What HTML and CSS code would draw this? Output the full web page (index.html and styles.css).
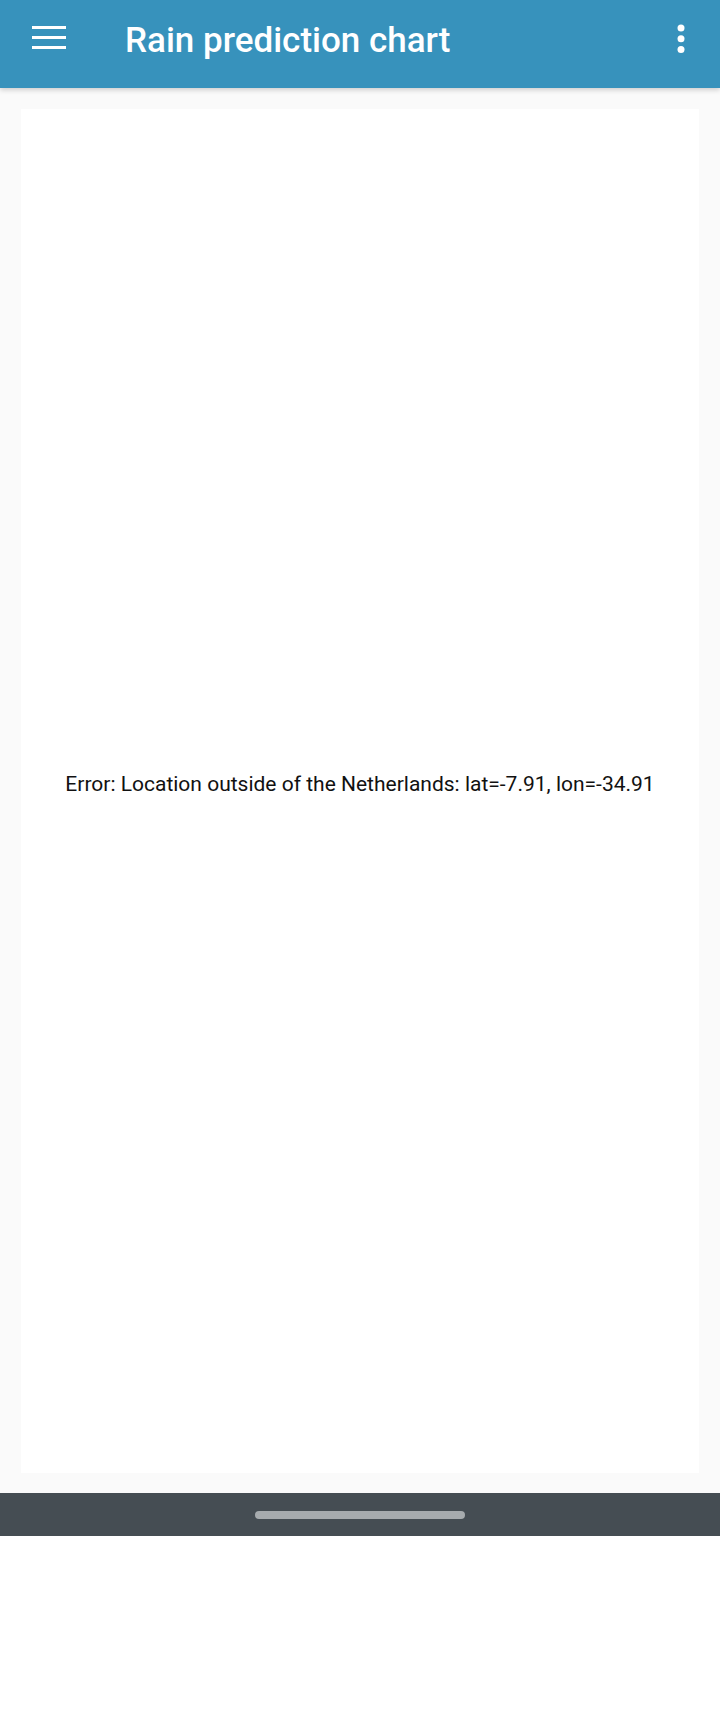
FILE: index.html
```html
<!DOCTYPE html>
<html lang="en">
<head>
<meta charset="utf-8">
<title>Rain prediction chart</title>
<link rel="stylesheet" href="styles.css">
</head>
<body>
<div class="screen">
  <header class="appbar">
    <div class="menu-btn">
      <svg width="34" height="23" viewBox="0 0 34 23"><rect x="0" y="0" width="34" height="3" fill="#fff"/><rect x="0" y="10" width="34" height="3" fill="#fff"/><rect x="0" y="20" width="34" height="3" fill="#fff"/></svg>
    </div>
    <h1 class="title">Rain prediction chart</h1>
    <div class="more-btn">
      <svg width="8" height="30" viewBox="0 0 8 30"><circle cx="4" cy="4" r="3.5" fill="#fff"/><circle cx="4" cy="14.7" r="3.5" fill="#fff"/><circle cx="4" cy="25.4" r="3.5" fill="#fff"/></svg>
    </div>
  </header>
  <main class="content">
    <section class="card">
      <p class="error">Error: Location outside of the Netherlands: lat=-7.91, lon=-34.91</p>
    </section>
  </main>
  <nav class="navbar"><span class="handle"></span></nav>
  <div class="filler"></div>
</div>
</body>
</html>
```

FILE: styles.css
```css
html, body {
  margin: 0;
  padding: 0;
  background: #ffffff;
}
body {
  font-family: Roboto, "Noto Sans", "Liberation Sans", sans-serif;
}
.screen {
  width: 720px;
  height: 1712px;
  display: flex;
  flex-direction: column;
}
.appbar {
  position: relative;
  z-index: 2;
  height: 88px;
  flex: 0 0 88px;
  background: #3792bc;
  display: flex;
  align-items: flex-start;
  box-shadow: 0 2px 5px rgba(0,0,0,0.18);
}
.menu-btn {
  width: 34px;
  height: 23px;
  margin-left: 32px;
  margin-top: 26px;
  display: flex;
}
.title {
  margin: 20px 0 0 59px;
  color: #ffffff;
  font-size: 35px;
  line-height: 41px;
  font-weight: 500;
  flex: 1;
}
.more-btn {
  width: 8px;
  height: 30px;
  margin-right: 35px;
  margin-top: 24px;
  display: flex;
}
.content {
  background: #fafafa;
  padding: 21px 21px 20px 21px;
  flex: 0 0 auto;
}
.card {
  background: #ffffff;
  height: 1364px;
  display: flex;
  align-items: center;
  justify-content: center;
  padding-bottom: 14px;
  box-sizing: border-box;
}
.error {
  margin: 0;
  font-size: 21px;
  color: #111111;
}
.navbar {
  height: 43px;
  flex: 0 0 43px;
  background: #454d53;
  display: flex;
  justify-content: center;
  align-items: center;
}
.handle {
  width: 210px;
  height: 8px;
  border-radius: 4px;
  background: #a6abae;
}
.filler {
  flex: 1;
  background: #ffffff;
}
```
